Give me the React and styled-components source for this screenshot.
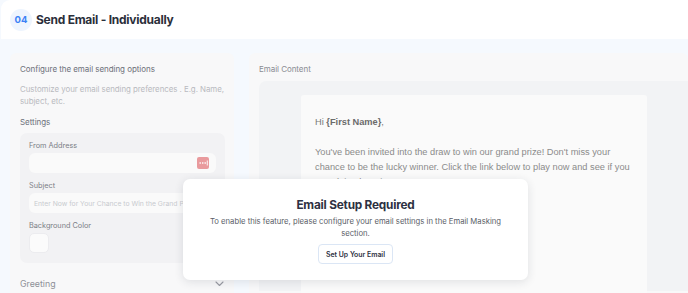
import React from 'react';
import styled, { createGlobalStyle } from 'styled-components';

const GlobalStyle = createGlobalStyle`
  html, body { margin: 0; padding: 0; }
  body {
    background: #f5f9fe;
    font-family: Inter, "Noto Sans", sans-serif;
    overflow: hidden;
  }
`;

const Page = styled.div`
  width: 688px;
  height: 293px;
  position: relative;
  overflow: hidden;
  background: #f5f9fe;
`;

const Header = styled.header`
  margin-left: 1px;
  height: 39px;
  background: #ffffff;
  border-top-left-radius: 9px;
  display: flex;
  align-items: center;
  gap: 4px;
  padding-left: 9px;
`;

const StepBadge = styled.span`
  width: 22px;
  height: 22px;
  border-radius: 50%;
  background: #eef5fe;
  color: #3b82f6;
  font-size: 9.5px;
  font-weight: 700;
  display: flex;
  align-items: center;
  justify-content: center;
`;

const Title = styled.h1`
  margin: 0;
  font-size: 12px;
  font-weight: 700;
  color: #2b2f3a;
  letter-spacing: -0.25px;
`;

const Body = styled.div`
  display: flex;
  gap: 15px;
  padding: 14px 0 0 10px;
`;

const Panel = styled.section`
  background: #f8f8f9;
  border-radius: 6px 6px 0 0;
  padding: ${p => p.$pad};
  width: ${p => p.$width};
  flex: ${p => p.$flex || 'none'};
  box-sizing: border-box;
  height: 260px;
`;

const PanelTitle = styled.div`
  font-size: 8px;
  color: ${p => p.$color || '#6d707a'};
  letter-spacing: -0.05px;
`;

const Hint = styled.p`
  margin: 9px 0 10px;
  font-size: 7.9px;
  line-height: 12px;
  color: #b8bac0;
  letter-spacing: -0.05px;
`;

const SettingsCard = styled.div`
  margin: 6px 2px 0 0;
  background: #f2f2f4;
  border-radius: 7px;
  padding: 8px 9px 10px;
  display: flex;
  flex-direction: column;
`;

const FieldLabel = styled.label`
  font-size: 7.3px;
  color: #7b7e86;
  margin: ${p => p.$first ? '0' : '8px'} 0 3px;
`;

const Input = styled.div`
  height: 20px;
  background: #fafafa;
  border-radius: 6px;
  display: flex;
  align-items: center;
  justify-content: space-between;
  padding: 0 7px 0 5px;
  font-size: 6.8px;
  color: #c8cacf;
  white-space: nowrap;
  overflow: hidden;
`;

const DotsButton = styled.span`
  width: 12px;
  height: 12px;
  border-radius: 2px;
  background: #e99a9d;
  display: flex;
  align-items: center;
  justify-content: center;
`;

const Swatch = styled.div`
  width: 20px;
  height: 20px;
  background: #fbfbfb;
  border: 1px solid #ececef;
  border-radius: 5px;
  box-sizing: border-box;
`;

const Accordion = styled.div`
  display: flex;
  justify-content: space-between;
  align-items: center;
  margin-top: 15px;
  padding-right: 3px;
  font-size: 8.8px;
  color: #8e9098;
`;

const ContentBox = styled.div`
  margin-top: 7px;
  background: #f2f3f5;
  border-radius: 7px 0 0 0;
  padding: 14px 0 0 42px;
  height: 210px;
  box-sizing: border-box;
`;

const Paper = styled.div`
  width: 346px;
  height: 200px;
  background: #fafafa;
  border-radius: 3px 3px 0 0;
  padding: 20px 10px 20px 14px;
  box-sizing: border-box;
  font-family: "Liberation Sans", Arial, sans-serif;
  color: #8b8b8b;
  font-size: 9.25px;
  line-height: 15px;
`;

const Greeting = styled.p`
  margin: 0 0 15px;
  color: #777777;
  b { color: #6b6b6b; }
`;

const Para = styled.p`
  margin: 0;
`;

const Modal = styled.div`
  position: absolute;
  left: 183px;
  top: 179px;
  width: 345px;
  height: 101px;
  background: #ffffff;
  border-radius: 7px;
  box-shadow: 0 2px 10px rgba(30, 40, 60, 0.12);
  display: flex;
  flex-direction: column;
  align-items: center;
  padding-top: 19px;
  box-sizing: border-box;
  text-align: center;
`;

const ModalTitle = styled.h2`
  margin: 0;
  font-size: 11.8px;
  font-weight: 700;
  color: #2d3142;
  letter-spacing: -0.2px;
`;

const ModalText = styled.p`
  margin: 4px 16px 0;
  font-size: 7.7px;
  line-height: 12px;
  color: #5b5e68;
`;

const ModalButton = styled.button`
  margin-top: 4px;
  height: 20px;
  padding: 0 7px;
  background: #ffffff;
  border: 1px solid #dbe6f5;
  border-radius: 4px;
  font-family: inherit;
  font-size: 6.9px;
  font-weight: 600;
  color: #2d3142;
`;

const Dots = () => (
  <svg width="9" height="6" viewBox="0 0 9 6">
    <rect x="0.5" y="2.3" width="1.4" height="1.4" fill="#fff" />
    <rect x="3" y="2.3" width="1.4" height="1.4" fill="#fff" />
    <rect x="5.5" y="2.3" width="1.4" height="1.4" fill="#fff" />
    <rect x="7.8" y="0.5" width="0.9" height="5" fill="#fff" />
  </svg>
);

const Chevron = () => (
  <svg width="9" height="6" viewBox="0 0 9 6" fill="none">
    <path d="M1 1l3.5 3.5L8 1" stroke="#9a9ca3" strokeWidth="1.1" strokeLinecap="round" strokeLinejoin="round" />
  </svg>
);

export default function App() {
  return (
    <Page>
      <GlobalStyle />
      <Header>
        <StepBadge>04</StepBadge>
        <Title>Send Email - Individually</Title>
      </Header>

      <Body>
        <Panel $width="224px" $pad="11px 7px 0 10px">
          <PanelTitle>Configure the email sending options</PanelTitle>
          <Hint>Customize your email sending preferences . E.g. Name, subject, etc.</Hint>
          <PanelTitle>Settings</PanelTitle>
          <SettingsCard>
            <FieldLabel $first>From Address</FieldLabel>
            <Input>
              <span />
              <DotsButton><Dots /></DotsButton>
            </Input>
            <FieldLabel>Subject</FieldLabel>
            <Input>Enter Now for Your Chance to Win the Grand Prize!</Input>
            <FieldLabel>Background Color</FieldLabel>
            <Swatch />
          </SettingsCard>
          <Accordion>
            <span>Greeting</span>
            <Chevron />
          </Accordion>
        </Panel>

        <Panel $flex="1" $pad="11px 0 0 10px">
          <PanelTitle $color="#8a8c93">Email Content</PanelTitle>
          <ContentBox>
            <Paper>
              <Greeting>Hi <b>{'{First Name}'}</b>,</Greeting>
              <Para>
                You've been invited into the draw to win our grand prize! Don't miss your
                chance to be the lucky winner. Click the link below to play now and see if you
                can claim the prize!
              </Para>
            </Paper>
          </ContentBox>
        </Panel>
      </Body>

      <Modal>
        <ModalTitle>Email Setup Required</ModalTitle>
        <ModalText>To enable this feature, please configure your email settings in the Email Masking section.</ModalText>
        <ModalButton>Set Up Your Email</ModalButton>
      </Modal>
    </Page>
  );
}
